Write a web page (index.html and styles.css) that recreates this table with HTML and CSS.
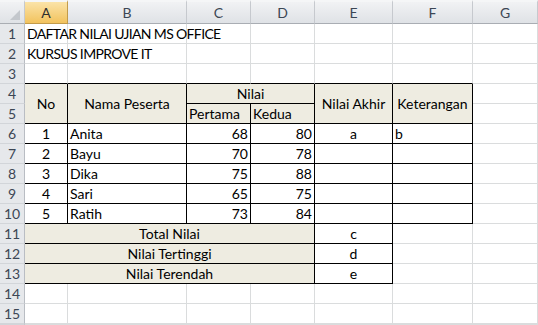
FILE: index.html
```html
<!DOCTYPE html>
<html>
<head>
<meta charset="utf-8">
<link rel="stylesheet" href="styles.css">
</head>
<body>
<div class="sheet">
  <div class="corner"><span class="tri"></span></div>
  <div class="ch sel">A</div>
  <div class="ch">B</div>
  <div class="ch">C</div>
  <div class="ch">D</div>
  <div class="ch">E</div>
  <div class="ch">F</div>
  <div class="ch">G</div>

  <div class="rh">1</div>
  <div class="c wide">DAFTAR NILAI UJIAN MS OFFICE</div>
  <div class="c"></div><div class="c"></div><div class="c"></div><div class="c"></div><div class="c"></div><div class="c"></div>

  <div class="rh">2</div>
  <div class="c wide">KURSUS IMPROVE IT</div>
  <div class="c"></div><div class="c"></div><div class="c"></div><div class="c"></div><div class="c"></div><div class="c"></div>

  <div class="rh">3</div>
  <div class="c tb"></div><div class="c tb"></div><div class="c tb"></div><div class="c tb"></div><div class="c tb"></div><div class="c tb"></div><div class="c"></div>

  <div class="rh">4</div>
  <div class="c t fill ctr r2">No</div>
  <div class="c t fill ctr r2">Nama Peserta</div>
  <div class="c t fill ctr c2">Nilai</div>
  <div class="c t fill ctr r2">Nilai Akhir</div>
  <div class="c t fill ctr r2">Keterangan</div>
  <div class="c"></div>

  <div class="rh">5</div>
  <div class="c t fill">Pertama</div>
  <div class="c t fill">Kedua</div>
  <div class="c"></div>

  <div class="rh">6</div>
  <div class="c t ctr">1</div><div class="c t">Anita</div><div class="c t rt">68</div><div class="c t rt">80</div><div class="c t ctr">a</div><div class="c t">b</div><div class="c"></div>

  <div class="rh">7</div>
  <div class="c t ctr">2</div><div class="c t">Bayu</div><div class="c t rt">70</div><div class="c t rt">78</div><div class="c t"></div><div class="c t"></div><div class="c"></div>

  <div class="rh">8</div>
  <div class="c t ctr">3</div><div class="c t">Dika</div><div class="c t rt">75</div><div class="c t rt">88</div><div class="c t"></div><div class="c t"></div><div class="c"></div>

  <div class="rh">9</div>
  <div class="c t ctr">4</div><div class="c t">Sari</div><div class="c t rt">65</div><div class="c t rt">75</div><div class="c t"></div><div class="c t"></div><div class="c"></div>

  <div class="rh">10</div>
  <div class="c t ctr">5</div><div class="c t">Ratih</div><div class="c t rt">73</div><div class="c t rt">84</div><div class="c t"></div><div class="c t"></div><div class="c"></div>

  <div class="rh">11</div>
  <div class="c t fill ctr c4">Total Nilai</div><div class="c t ctr">c</div><div class="c"></div><div class="c"></div>

  <div class="rh">12</div>
  <div class="c t fill ctr c4">Nilai Tertinggi</div><div class="c t ctr">d</div><div class="c"></div><div class="c"></div>

  <div class="rh">13</div>
  <div class="c t fill ctr c4">Nilai Terendah</div><div class="c t ctr">e</div><div class="c"></div><div class="c"></div>

  <div class="rh">14</div>
  <div class="c"></div><div class="c"></div><div class="c"></div><div class="c"></div><div class="c"></div><div class="c"></div><div class="c"></div>

  <div class="rh">15</div>
  <div class="c"></div><div class="c"></div><div class="c"></div><div class="c"></div><div class="c"></div><div class="c"></div><div class="c"></div>

  <div class="rh"></div>
  <div class="c"></div><div class="c"></div><div class="c"></div><div class="c"></div><div class="c"></div><div class="c"></div><div class="c"></div>
</div>
</body>
</html>
```

FILE: styles.css
```css
html, body {
  margin: 0;
  padding: 0;
  background: #ffffff;
}

body {
  width: 538px;
  height: 325px;
  overflow: hidden;
  font-family: "Lato", "Open Sans", sans-serif;
  font-size: 14px;
  color: #000;
}

.sheet {
  display: grid;
  grid-template-columns: 25px 43px 119px 64px 64px 78px 80px 65px;
  grid-template-rows: 24px repeat(15, 20px) 1px;
}

.corner {
  position: relative;
  box-sizing: border-box;
  border-top: 2px solid #f5f6f7;
  border-right: 1px solid #c6c9ce;
  border-bottom: 1px solid #a9adb3;
  background: linear-gradient(#f1f2f4, #dfe2e6);
}

.tri {
  position: absolute;
  right: 4px;
  bottom: 3px;
  width: 0;
  height: 0;
  border-left: 10px solid transparent;
  border-bottom: 10px solid #c3c7cc;
}

.ch {
  box-sizing: border-box;
  border-top: 2px solid #f5f6f7;
  border-right: 1px solid #c6c9ce;
  border-bottom: 1px solid #a9adb3;
  background: linear-gradient(#f1f2f4, #dfe2e6);
  color: #3c4654;
  display: flex;
  align-items: center;
  justify-content: center;
  padding-bottom: 1px;
}

.ch.sel {
  background: linear-gradient(#fbe3a8, #f2c35e);
  border-right-color: #c29b4b;
  border-bottom-color: #c29b4b;
  color: #2e2e2e;
}

.rh {
  box-sizing: border-box;
  border-right: 1px solid #b9bdc3;
  border-bottom: 1px solid #d2d5d9;
  background: #e6e8eb;
  color: #3c4654;
  display: flex;
  align-items: center;
  justify-content: center;
  font-size: 14px;
  overflow: hidden;
}

.c {
  box-sizing: border-box;
  border-right: 1px solid #dadcdd;
  border-bottom: 1px solid #dadcdd;
  display: flex;
  align-items: center;
  padding: 0 2px 0 2px;
  white-space: nowrap;
  overflow: hidden;
}

.wide {
  overflow: visible;
  z-index: 1;
  letter-spacing: -0.65px;
}

.c.t {
  border-right-color: #000;
  border-bottom-color: #000;
}

.c.tb {
  border-bottom-color: #000;
}

.fill {
  background: #eeece1;
}

.ctr {
  justify-content: center;
}

.rt {
  justify-content: flex-end;
}

.r2 {
  grid-row: span 2;
}

.c2 {
  grid-column: span 2;
}

.c4 {
  grid-column: span 4;
}
```
